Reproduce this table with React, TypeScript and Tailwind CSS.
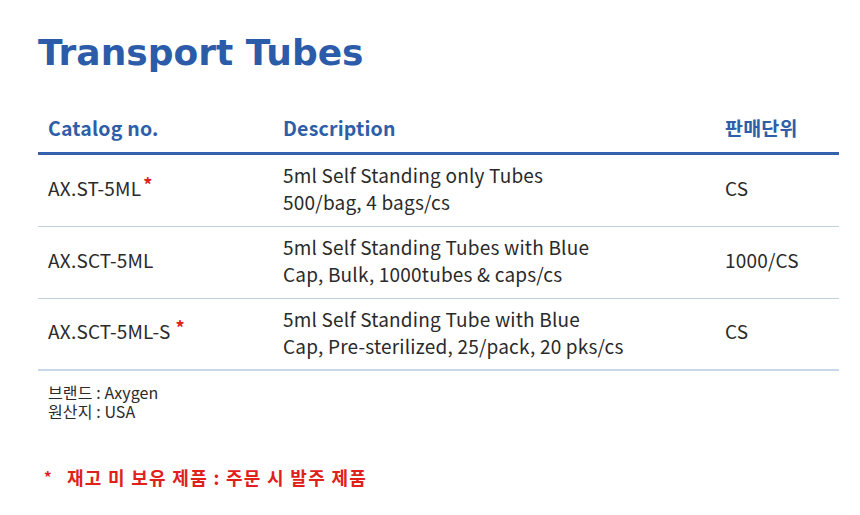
import React from 'react';

const rows = [
    { code: 'AX.ST-5ML', star: 'ml-[2px]', desc: ['5ml Self Standing only Tubes', '500/bag, 4 bags/cs'], unit: 'CS' },
    { code: 'AX.SCT-5ML', star: '', desc: ['5ml Self Standing Tubes with Blue', 'Cap, Bulk, 1000tubes & caps/cs'], unit: '1000/CS' },
    { code: 'AX.SCT-5ML-S', star: 'ml-[5px]', desc: ['5ml Self Standing Tube with Blue', 'Cap, Pre-sterilized, 25/pack, 20 pks/cs'], unit: 'CS' },
];

const App = () => {
    return (
        <div
            className="w-[860px] h-[515px] bg-white pl-[38px] pr-[21px] pt-[28px]"
            style={{ fontFamily: '"Noto Sans CJK KR", "Noto Sans", sans-serif' }}
        >
            <h1
                className="text-[36px] leading-[50px] font-bold text-[#2b5ba9]"
                style={{ fontFamily: '"DejaVu Sans", sans-serif' }}
            >
                Transport Tubes
            </h1>

            <div className="mt-[28px]">
                {/* header */}
                <div className="grid grid-cols-[245px_442px_1fr] h-[49px] pb-[2px] items-center border-b-[3px] border-[#3461ad] text-[19.5px] font-bold text-[#2f5ea8] tracking-[0.2px]">
                    <div className="pl-[10px]">Catalog no.</div>
                    <div>Description</div>
                    <div>판매단위</div>
                </div>

                {rows.map((r, i) => (
                    <div
                        key={r.code}
                        className={
                            'grid grid-cols-[245px_442px_1fr] h-[72px] pb-[5px] items-center text-[19px] text-[#2a2a2a] tracking-[0.2px] ' +
                            (i === rows.length - 1 ? 'border-b-2 border-[#c9d7ec]' : 'border-b border-[#c3d1de]')
                        }
                    >
                        <div className="pl-[10px] flex items-start">
                            <span>{r.code}</span>
                            {r.star && (
                                <span className={'text-[#e0201b] font-bold text-[18px] leading-none mt-[1px] ' + r.star}>*</span>
                            )}
                        </div>
                        <div className="leading-[27px]">
                            <div>{r.desc[0]}</div>
                            <div>{r.desc[1]}</div>
                        </div>
                        <div>{r.unit}</div>
                    </div>
                ))}
            </div>

            <div className="pl-[10px] pt-[12px] text-[16px] leading-[19px] text-[#2a2a2a] tracking-[0.1px]">
                <div>브랜드 : Axygen</div>
                <div>원산지 : USA</div>
            </div>

            <div className="mt-[43px] pl-[6px] flex items-center text-[18px] font-bold text-[#e0201b] tracking-[1.3px]">
                <span className="text-[15px] mr-[14px]">*</span>
                <span>재고 미 보유 제품 : 주문 시 발주 제품</span>
            </div>
        </div>
    );
};

export default App;
